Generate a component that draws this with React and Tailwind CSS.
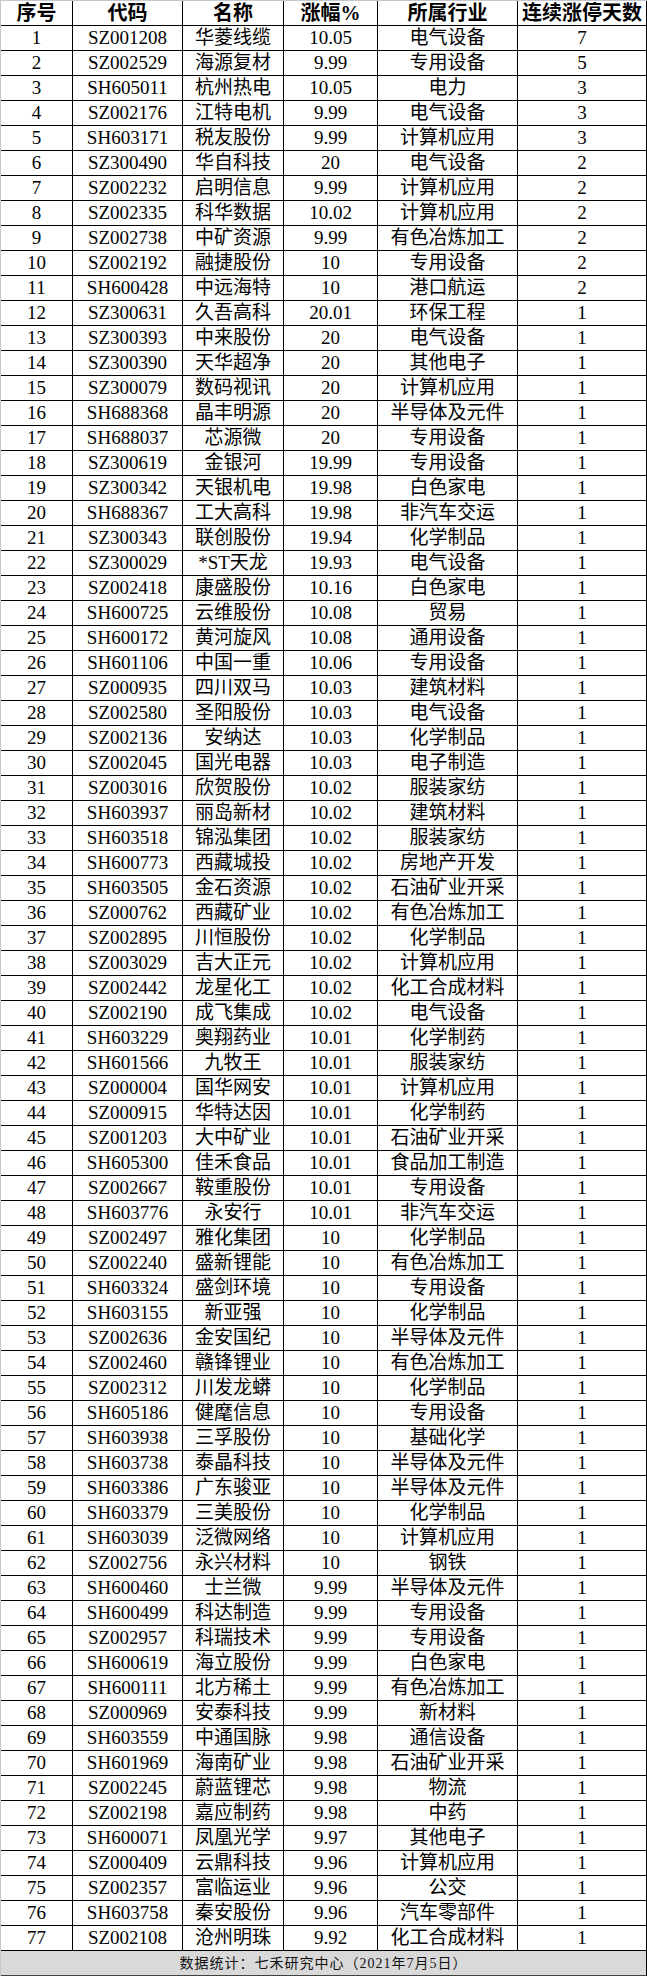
const rows = [
  ["SZ001208", "华菱线缆", "10.05", "电气设备", "7"],
  ["SZ002529", "海源复材", "9.99", "专用设备", "5"],
  ["SH605011", "杭州热电", "10.05", "电力", "3"],
  ["SZ002176", "江特电机", "9.99", "电气设备", "3"],
  ["SH603171", "税友股份", "9.99", "计算机应用", "3"],
  ["SZ300490", "华自科技", "20", "电气设备", "2"],
  ["SZ002232", "启明信息", "9.99", "计算机应用", "2"],
  ["SZ002335", "科华数据", "10.02", "计算机应用", "2"],
  ["SZ002738", "中矿资源", "9.99", "有色冶炼加工", "2"],
  ["SZ002192", "融捷股份", "10", "专用设备", "2"],
  ["SH600428", "中远海特", "10", "港口航运", "2"],
  ["SZ300631", "久吾高科", "20.01", "环保工程", "1"],
  ["SZ300393", "中来股份", "20", "电气设备", "1"],
  ["SZ300390", "天华超净", "20", "其他电子", "1"],
  ["SZ300079", "数码视讯", "20", "计算机应用", "1"],
  ["SH688368", "晶丰明源", "20", "半导体及元件", "1"],
  ["SH688037", "芯源微", "20", "专用设备", "1"],
  ["SZ300619", "金银河", "19.99", "专用设备", "1"],
  ["SZ300342", "天银机电", "19.98", "白色家电", "1"],
  ["SH688367", "工大高科", "19.98", "非汽车交运", "1"],
  ["SZ300343", "联创股份", "19.94", "化学制品", "1"],
  ["SZ300029", "*ST天龙", "19.93", "电气设备", "1"],
  ["SZ002418", "康盛股份", "10.16", "白色家电", "1"],
  ["SH600725", "云维股份", "10.08", "贸易", "1"],
  ["SH600172", "黄河旋风", "10.08", "通用设备", "1"],
  ["SH601106", "中国一重", "10.06", "专用设备", "1"],
  ["SZ000935", "四川双马", "10.03", "建筑材料", "1"],
  ["SZ002580", "圣阳股份", "10.03", "电气设备", "1"],
  ["SZ002136", "安纳达", "10.03", "化学制品", "1"],
  ["SZ002045", "国光电器", "10.03", "电子制造", "1"],
  ["SZ003016", "欣贺股份", "10.02", "服装家纺", "1"],
  ["SH603937", "丽岛新材", "10.02", "建筑材料", "1"],
  ["SH603518", "锦泓集团", "10.02", "服装家纺", "1"],
  ["SH600773", "西藏城投", "10.02", "房地产开发", "1"],
  ["SH603505", "金石资源", "10.02", "石油矿业开采", "1"],
  ["SZ000762", "西藏矿业", "10.02", "有色冶炼加工", "1"],
  ["SZ002895", "川恒股份", "10.02", "化学制品", "1"],
  ["SZ003029", "吉大正元", "10.02", "计算机应用", "1"],
  ["SZ002442", "龙星化工", "10.02", "化工合成材料", "1"],
  ["SZ002190", "成飞集成", "10.02", "电气设备", "1"],
  ["SH603229", "奥翔药业", "10.01", "化学制药", "1"],
  ["SH601566", "九牧王", "10.01", "服装家纺", "1"],
  ["SZ000004", "国华网安", "10.01", "计算机应用", "1"],
  ["SZ000915", "华特达因", "10.01", "化学制药", "1"],
  ["SZ001203", "大中矿业", "10.01", "石油矿业开采", "1"],
  ["SH605300", "佳禾食品", "10.01", "食品加工制造", "1"],
  ["SZ002667", "鞍重股份", "10.01", "专用设备", "1"],
  ["SH603776", "永安行", "10.01", "非汽车交运", "1"],
  ["SZ002497", "雅化集团", "10", "化学制品", "1"],
  ["SZ002240", "盛新锂能", "10", "有色冶炼加工", "1"],
  ["SH603324", "盛剑环境", "10", "专用设备", "1"],
  ["SH603155", "新亚强", "10", "化学制品", "1"],
  ["SZ002636", "金安国纪", "10", "半导体及元件", "1"],
  ["SZ002460", "赣锋锂业", "10", "有色冶炼加工", "1"],
  ["SZ002312", "川发龙蟒", "10", "化学制品", "1"],
  ["SH605186", "健麾信息", "10", "专用设备", "1"],
  ["SH603938", "三孚股份", "10", "基础化学", "1"],
  ["SH603738", "泰晶科技", "10", "半导体及元件", "1"],
  ["SH603386", "广东骏亚", "10", "半导体及元件", "1"],
  ["SH603379", "三美股份", "10", "化学制品", "1"],
  ["SH603039", "泛微网络", "10", "计算机应用", "1"],
  ["SZ002756", "永兴材料", "10", "钢铁", "1"],
  ["SH600460", "士兰微", "9.99", "半导体及元件", "1"],
  ["SH600499", "科达制造", "9.99", "专用设备", "1"],
  ["SZ002957", "科瑞技术", "9.99", "专用设备", "1"],
  ["SH600619", "海立股份", "9.99", "白色家电", "1"],
  ["SH600111", "北方稀土", "9.99", "有色冶炼加工", "1"],
  ["SZ000969", "安泰科技", "9.99", "新材料", "1"],
  ["SH603559", "中通国脉", "9.98", "通信设备", "1"],
  ["SH601969", "海南矿业", "9.98", "石油矿业开采", "1"],
  ["SZ002245", "蔚蓝锂芯", "9.98", "物流", "1"],
  ["SZ002198", "嘉应制药", "9.98", "中药", "1"],
  ["SH600071", "凤凰光学", "9.97", "其他电子", "1"],
  ["SZ000409", "云鼎科技", "9.96", "计算机应用", "1"],
  ["SZ002357", "富临运业", "9.96", "公交", "1"],
  ["SH603758", "秦安股份", "9.96", "汽车零部件", "1"],
  ["SZ002108", "沧州明珠", "9.92", "化工合成材料", "1"],
]

const headers = ["序号", "代码", "名称", "涨幅%", "所属行业", "连续涨停天数"]

// column widths include each cell's right border
const cols = "grid grid-cols-[72px_110px_101px_94px_140px_129px]"
const cell = "flex h-[25px] items-center justify-center border-r border-b border-black whitespace-nowrap"

export default function App() {
  return (
    <div className="w-[647px] bg-white font-['Liberation_Serif','Noto_Sans_CJK_SC',serif] text-black">
      <div className="border-t border-l border-[#c4c8cc]">
        <div className={cols}>
          {headers.map((h) => (
            <div key={h} className={cell + " text-[20px] font-bold"}>
              {h}
            </div>
          ))}
        </div>

        {rows.map((r, i) => (
          <div key={r[0]} className={cols + " text-[19px]"}>
            <div className={cell}>{i + 1}</div>
            {r.map((v, j) => (
              <div key={j} className={cell}>
                {v}
              </div>
            ))}
          </div>
        ))}

        <div className="flex h-[25px] items-center justify-center border-r border-b border-r-black border-b-[#404040] bg-[#d9d9d9] text-[14px] tracking-[1px] text-[#111]">
          数据统计：七禾研究中心（2021年7月5日）
        </div>
      </div>
    </div>
  )
}
